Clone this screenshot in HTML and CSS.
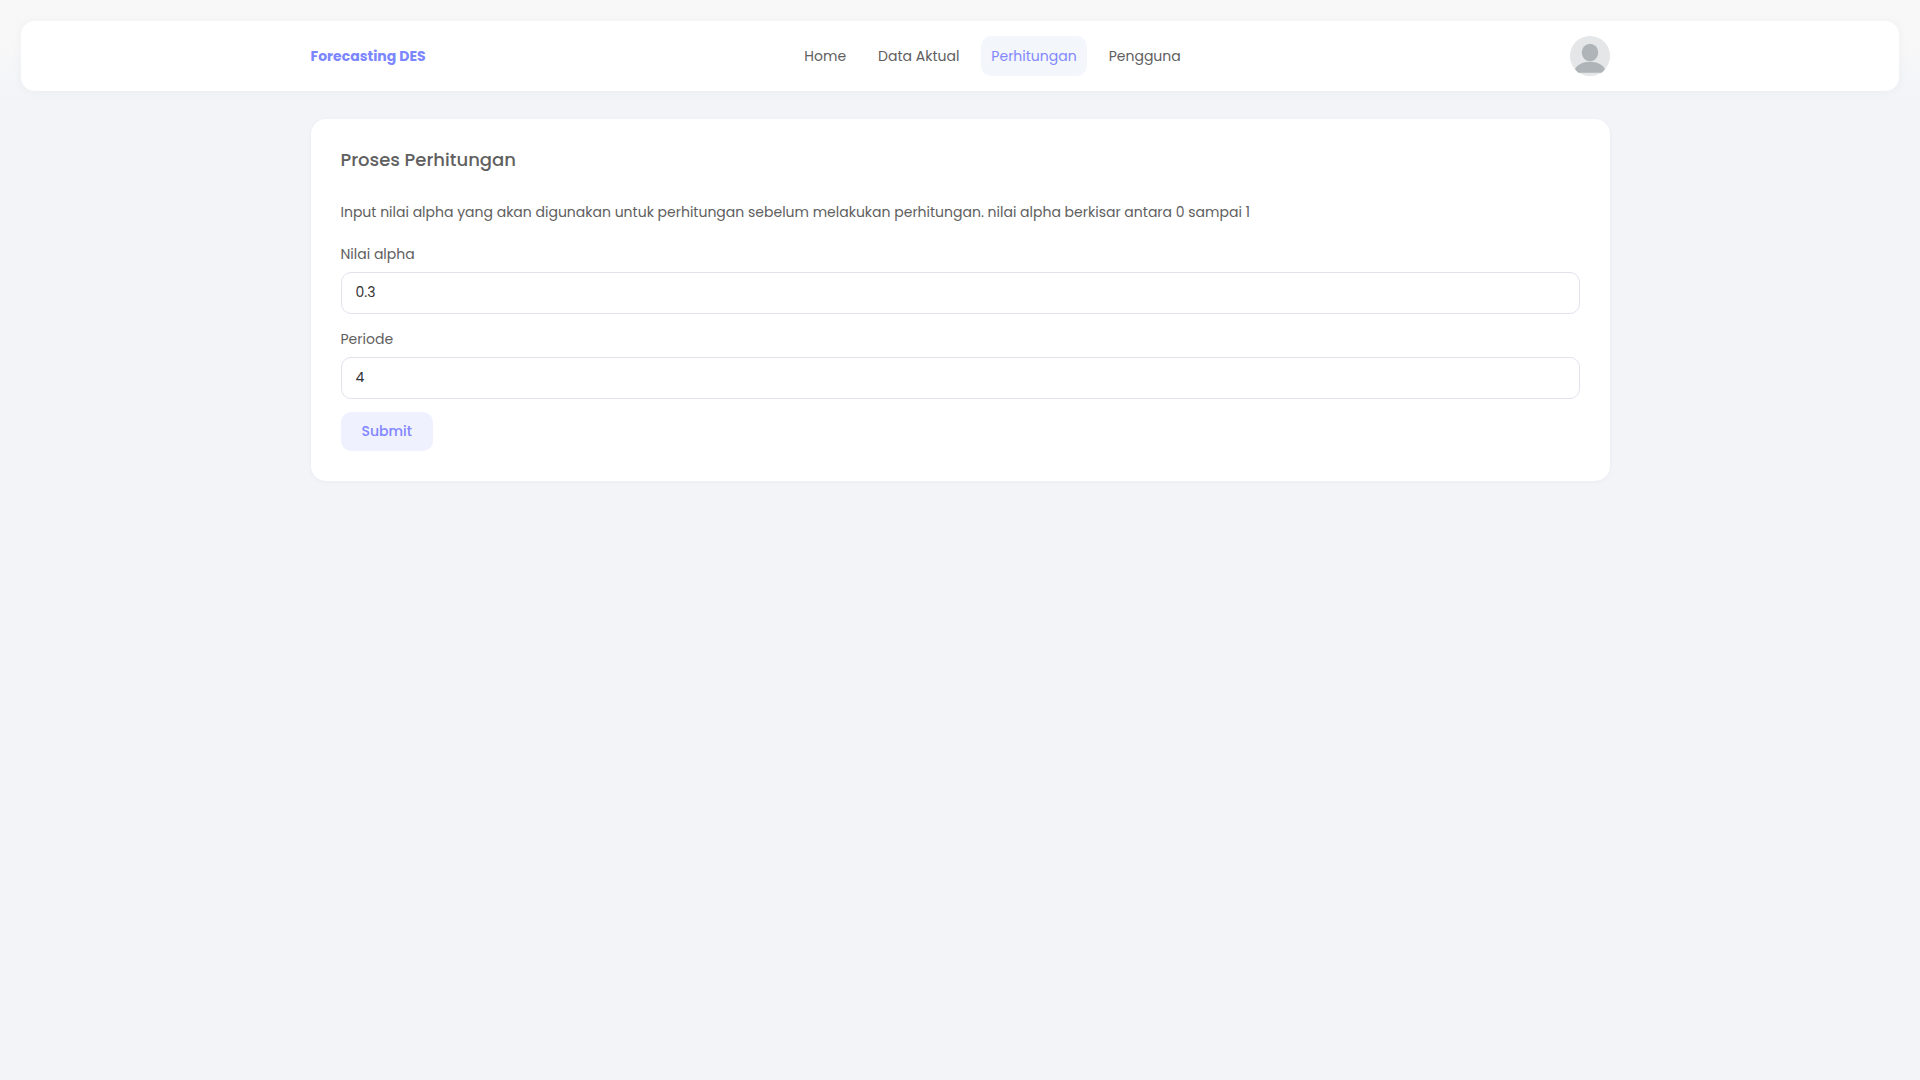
FILE: index.html
```html
<!DOCTYPE html>
<html lang="id">
<head>
  <meta charset="utf-8">
  <meta name="viewport" content="width=device-width, initial-scale=1">
  <title>Forecasting DES</title>
  <link rel="stylesheet" href="styles.css">
</head>
<body>
  <header class="topbar">
    <div class="navbar">
      <div class="container navbar-inner">
        <a class="brand" href="#">Forecasting DES</a>
        <nav class="menu">
          <a class="menu-link" href="#">Home</a>
          <a class="menu-link" href="#">Data Aktual</a>
          <a class="menu-link active" href="#" aria-current="page">Perhitungan</a>
          <a class="menu-link" href="#">Pengguna</a>
        </nav>
        <button class="avatar" type="button" aria-label="Akun">
          <svg viewBox="0 0 40 40" width="40" height="40" aria-hidden="true">
            <circle cx="20" cy="20" r="20" fill="#e4e6e7"/>
            <ellipse cx="20" cy="16.5" rx="8.2" ry="8.7" fill="#aeb4b7"/>
            <path d="M5 33C7.500 28.500 13 25.700 20 25.700S32.500 28.500 35 33C34 34.500 33 35.700 31.500 36.700H8.500C7 35.700 6 34.500 5 33Z" fill="#aeb4b7"/>
          </svg>
        </button>
      </div>
    </div>
  </header>
  <main class="container">
    <section class="card">
      <h1 class="card-title">Proses Perhitungan</h1>
      <p class="card-text">Input nilai alpha yang akan digunakan untuk perhitungan sebelum melakukan perhitungan. nilai alpha berkisar antara 0 sampai 1</p>
      <form class="form">
        <div class="field">
          <label for="alpha">Nilai alpha</label>
          <input id="alpha" name="alpha" type="text" value="0.3">
        </div>
        <div class="field">
          <label for="periode">Periode</label>
          <input id="periode" name="periode" type="text" value="4">
        </div>
        <button class="submit" type="submit">Submit</button>
      </form>
    </section>
  </main>
</body>
</html>
```

FILE: styles.css
```css
* {
  box-sizing: border-box;
}

body {
  margin: 0;
  min-height: 100vh;
  background: #f2f4f8;
  color: #606060;
  font-family: Poppins, Inter, sans-serif;
  font-size: 14px;
  line-height: 22px;
}

.container {
  width: 100%;
  max-width: 1299px;
  margin: 0 auto;
}

.topbar {
  padding: 21px 21px 28px;
  background: linear-gradient(to bottom, rgba(248, 248, 248, 0.95) 44%, rgba(248, 248, 248, 0.46) 73%, rgba(248, 248, 248, 0)) top / 100% 102px no-repeat;
}

.navbar {
  padding: 15px 0;
  border-radius: 14px;
  background: #fff;
  box-shadow: 0 1px 10px rgba(50, 50, 93, 0.05);
}

.navbar-inner {
  display: flex;
  align-items: center;
  justify-content: space-between;
}

.brand {
  color: #7b86ff;
  font-weight: 700;
  text-decoration: none;
}

.menu {
  display: flex;
  gap: 12px;
  margin-right: 10px;
}

.menu-link {
  padding: 9px 10px;
  border-radius: 10px;
  color: inherit;
  text-decoration: none;
}

.menu-link.active {
  background: #f3f6fb;
  color: #8288ff;
}

.avatar {
  display: flex;
  padding: 0;
  border: 0;
  border-radius: 50%;
  background: none;
  cursor: pointer;
}

.card {
  padding: 30px;
  border-radius: 15px;
  background: #fff;
  box-shadow: 0 1px 5px rgba(50, 50, 93, 0.04);
}

.card-title {
  margin: 0 0 30px;
  font-size: 18px;
  font-weight: 500;
  line-height: 22px;
}

.card-text {
  margin: 0 0 19px;
}

.form {
  display: flex;
  flex-direction: column;
  align-items: flex-start;
  gap: 13px;
}

.field {
  display: flex;
  flex-direction: column;
  gap: 6px;
  width: 100%;
}

.field label {
  line-height: 24px;
}

.field input {
  height: 42px;
  padding: 0 14px 2px;
  border: 1px solid #e2e2ee;
  border-radius: 10px;
  background: #fff;
  color: #333;
  font: inherit;
}

.submit {
  height: 39px;
  padding: 0 21px 1px;
  border: 0;
  border-radius: 10px;
  background: #f0f1ff;
  color: #7f86ff;
  font: inherit;
  font-weight: 500;
  cursor: pointer;
}
```
